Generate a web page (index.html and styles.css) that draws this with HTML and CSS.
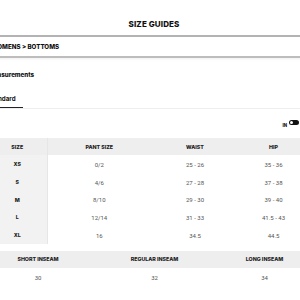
FILE: index.html
```html
<!DOCTYPE html>
<html>
<head>
<meta charset="utf-8">
<link rel="stylesheet" href="styles.css">
</head>
<body>
<div class="page">
  <header class="title">SIZE GUIDES</header>
  <nav class="crumb"><span>WOMENS &gt; BOTTOMS</span></nav>
  <div class="shade"></div>
  <h2 class="measure">Measurements</h2>
  <div class="tabs"><span class="tab active">Standard</span></div>
  <div class="units"><span class="unit-label">IN</span><span class="toggle"><span class="knob"></span></span></div>
  <table class="sizes">
    <colgroup><col class="c1"><col class="c2"><col class="c3"><col class="c4"></colgroup>
    <thead><tr><th class="first">SIZE</th><th>PANT SIZE</th><th>WAIST</th><th>HIP</th></tr></thead>
    <tbody>
      <tr><th class="first">XS</th><td>0/2</td><td>25 - 26</td><td>35 - 36</td></tr>
      <tr><th class="first">S</th><td>4/6</td><td>27 - 28</td><td>37 - 38</td></tr>
      <tr><th class="first">M</th><td>8/10</td><td>29 - 30</td><td>39 - 40</td></tr>
      <tr><th class="first">L</th><td>12/14</td><td>31 - 33</td><td>41.5 - 43</td></tr>
      <tr><th class="first">XL</th><td>16</td><td>34.5</td><td>44.5</td></tr>
    </tbody>
  </table>
  <table class="inseam">
    <colgroup><col class="i1"><col class="i2"><col class="i3"></colgroup>
    <thead><tr><th>SHORT INSEAM</th><th>REGULAR INSEAM</th><th>LONG INSEAM</th></tr></thead>
    <tbody><tr><td>30</td><td>32</td><td>34</td></tr></tbody>
  </table>
  <div class="foot"></div>
</div>
</body>
</html>
```
FILE: styles.css
```css
html, body { margin: 0; padding: 0; background: #fff; }
body { width: 300px; height: 300px; overflow: hidden; font-family: "Inter", "Liberation Sans", sans-serif; color: #111; }
.page { width: 320px; margin-left: -12px; }
.title { height: 35px; display: flex; align-items: flex-end; justify-content: center; padding-left: 12px; box-sizing: border-box; padding-bottom: 6px; font-family: "Inter", sans-serif; font-weight: 800; font-size: 8px; letter-spacing: 0.1px; }
.crumb { border-top: 2px solid #b3b3b3; border-bottom: 2px solid #bdbdbd; height: 23px; display: flex; align-items: center; font-family: "Inter", sans-serif; font-weight: 800; font-size: 6.2px; padding-left: 3px; box-sizing: border-box; }
.shade { height: 3px; background: linear-gradient(#f3f3f3, #fff); }
.measure { margin: 0; height: 19px; padding-top: 10px; box-sizing: content-box; font-family: "Inter", sans-serif; font-weight: 800; font-size: 6.2px; padding-left: 0; }
.tabs { height: 18px; border-bottom: 1px solid #eee; display: flex; align-items: flex-end; }
.tab { font-family: "Inter", sans-serif; font-weight: 700; font-size: 6.2px; padding: 0 2px 5px 0; border-bottom: 1px solid #222; width: 33px; }
.units { height: 29px; display: flex; justify-content: flex-end; align-items: center; padding-right: 9px; gap: 2px; }
.unit-label { font-family: "Inter", sans-serif; font-weight: 800; font-size: 4.3px; margin-top: 3px; }
.toggle { width: 10px; height: 5px; background: #111; border-radius: 3px; display: flex; align-items: center; padding-left: 1px; box-sizing: border-box; margin-top: -2px; }
.knob { width: 3px; height: 3px; background: #fff; border-radius: 50%; }
table { border-collapse: collapse; table-layout: fixed; width: 320px; }
.c1 { width: 59px; } .c2 { width: 104px; } .c3 { width: 88px; } .c4 { width: 69px; }
.i1 { width: 100px; } .i2 { width: 133px; } .i3 { width: 87px; }
th { font-family: "Inter", sans-serif; font-weight: 800; font-size: 5.3px; color: #222; text-align: center; }
td { font-family: "Roboto", sans-serif; font-weight: 400; font-size: 6px; color: #555; text-align: center; }
.sizes thead tr { background: #eeeeee; height: 17px; }
.sizes tbody tr { height: 17.6px; }
.sizes tbody tr:first-child { height: 18.5px; }
.sizes th.first { background: #eeeeee; border-right: 1px solid #e6e6e6; }
.sizes tbody th.first { background: #f2f2f2; }
.inseam { margin-top: 7px; }
.inseam thead tr { background: #eeeeee; height: 17px; }
.inseam tbody tr { height: 19px; }
.foot { height: 14px; border-bottom: 1px solid #eee; }
```
